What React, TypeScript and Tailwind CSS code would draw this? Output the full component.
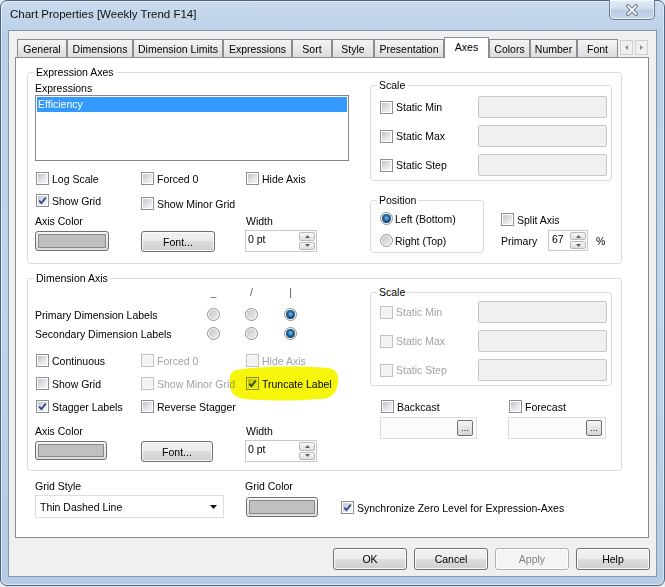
import type { ReactNode } from "react"
import clsx from "clsx"

function Box({ checked, disabled }: { checked?: boolean; disabled?: boolean }) {
	return (
		<span
			className={clsx(
				"relative flex h-[13px] w-[13px] shrink-0 items-center justify-center border",
				disabled ? "border-[#c2c2c2] bg-[#f6f6f6]" : "border-[#8e8f8f] bg-white",
			)}
		>
			<span
				className={clsx(
					"h-[9px] w-[9px]",
					disabled ? "bg-[#f2f2f2]" : "bg-[linear-gradient(135deg,#bfc3c9_0%,#e3e5e8_55%,#f7f7f7_100%)]",
				)}
			/>
			{checked && (
				<svg viewBox="0 0 11 11" className="absolute left-0 top-0 h-[11px] w-[11px]">
					<path d="M2.2 5.6 L4.4 8 L8.8 2.6" fill="none" stroke="#33478a" strokeWidth="1.8" />
				</svg>
			)}
		</span>
	)
}

function Chk({
	label,
	checked,
	disabled,
	className,
}: {
	label: string
	checked?: boolean
	disabled?: boolean
	className?: string
}) {
	return (
		<div className={clsx("flex items-center gap-[3px] whitespace-nowrap", className)}>
			<Box checked={checked} disabled={disabled} />
			<span className={disabled ? "text-[#a2a2a2]" : ""}>{label}</span>
		</div>
	)
}

function Radio({ on }: { on?: boolean }) {
	return (
		<span className="flex h-[13px] w-[13px] shrink-0 items-center justify-center rounded-full border border-[#929292] bg-[#f6f6f6]">
			<span
				className={clsx(
					"h-[9px] w-[9px] rounded-full",
					on
						? "bg-[radial-gradient(circle_at_50%_45%,#9fd4f5_0%,#2f7fbe_28%,#0b3a66_70%)]"
						: "bg-[linear-gradient(135deg,#c6c6c6,#ededed)]",
				)}
			/>
		</span>
	)
}

function RadioItem({ label, on }: { label: string; on?: boolean }) {
	return (
		<div className="flex items-center gap-[2px] whitespace-nowrap">
			<Radio on={on} />
			<span>{label}</span>
		</div>
	)
}

function Group({ label, className, children }: { label: string; className?: string; children?: ReactNode }) {
	return (
		<div className={clsx("relative rounded-[3px] border border-[#d5dfe5]", className)}>
			<span className="absolute -top-[7px] left-[6px] whitespace-nowrap bg-white px-[2px] leading-[12px]">{label}</span>
			{children}
		</div>
	)
}

function Btn({ children, className, disabled }: { children: ReactNode; className?: string; disabled?: boolean }) {
	return (
		<div
			className={clsx(
				"flex items-center justify-center rounded-[3px] border shadow-[inset_0_0_0_1px_rgba(255,255,255,0.85)]",
				disabled
					? "border-[#adb2b5] bg-[#f4f4f4] text-[#838383]"
					: "border-[#707070] bg-[linear-gradient(#f2f2f2_0%,#ebebeb_49%,#dddddd_50%,#cfcfcf_100%)]",
				className,
			)}
		>
			{children}
		</div>
	)
}

function Swatch({ className }: { className?: string }) {
	return (
		<div className={clsx("rounded-[3px] border border-[#707070] bg-[linear-gradient(#f6f6f6,#dcdcdc)] p-[2px]", className)}>
			<div className="h-full w-full border border-[#8a8a8a] bg-[#c0c0c0]" />
		</div>
	)
}

function SpinBtn({ up }: { up?: boolean }) {
	return (
		<span className="flex flex-1 items-center justify-center rounded-[2px] border border-[#b9b9b9] bg-[linear-gradient(#f7f7f7,#dfdfdf)]">
			<svg width="5" height="3" viewBox="0 0 5 3">
				<path d={up ? "M0 3 L2.5 0 L5 3Z" : "M0 0 L5 0 L2.5 3Z"} fill="#5f5f5f" />
			</svg>
		</span>
	)
}

function Spin({ value, className }: { value: string; className?: string }) {
	return (
		<div className={clsx("flex border border-[#c9c9c9] bg-white", className)}>
			<span className="flex-1 pl-[2px] pt-[2px]">{value}</span>
			<div className="flex w-[17px] flex-col gap-px py-px pr-px">
				<SpinBtn up />
				<SpinBtn />
			</div>
		</div>
	)
}

function TextBox({ className }: { className?: string }) {
	return <div className={clsx("rounded-[2px] border border-[#c6c6c6] bg-[#f0f0f0]", className)} />
}

function Browse({ className }: { className?: string }) {
	return (
		<div className={clsx("flex items-center justify-end border border-[#dedede] bg-[#fbfbfb] pr-[3px]", className)}>
			<div className="flex h-[16px] w-[16px] items-end justify-center rounded-[2px] border border-[#707070] bg-[linear-gradient(#f4f4f4,#d6d6d6)] pb-[2px] text-[9px] leading-[9px]">
				...
			</div>
		</div>
	)
}

const tabs: [string, number][] = [
	["General", 50],
	["Dimensions", 66],
	["Dimension Limits", 90],
	["Expressions", 69],
	["Sort", 40],
	["Style", 42],
	["Presentation", 70],
	["Axes", 45],
	["Colors", 41],
	["Number", 47],
	["Font", 41],
]

function TabStrip() {
	return (
		<div className="flex h-[20px] items-end pl-[2px]">
			{tabs.map(([name, w]) =>
				name === "Axes" ? (
					<div
						key={name}
						style={{ width: w }}
						className="relative z-10 -mb-px flex h-[21px] items-center justify-center border border-b-0 border-[#898c95] bg-white pb-[3px]"
					>
						{name}
					</div>
				) : (
					<div
						key={name}
						style={{ width: w }}
						className="flex h-[18px] items-center justify-center border border-b-0 border-[#898c95] bg-[linear-gradient(#f4f4f4_0%,#e9e9e9_50%,#dcdcdc_100%)]"
					>
						{name}
					</div>
				),
			)}
			<div className="mb-[2px] ml-[2px] flex gap-[2px]">
				{[true, false].map((left) => (
					<div
						key={String(left)}
						className="flex h-[15px] w-[13px] items-center justify-center border border-[#cfcfcf] bg-[#f0f0f0]"
					>
						<svg width="3" height="5" viewBox="0 0 3 5">
							<path d={left ? "M3 0 L0 2.5 L3 5Z" : "M0 0 L3 2.5 L0 5Z"} fill="#8a8a8a" />
						</svg>
					</div>
				))}
			</div>
		</div>
	)
}

function ExpressionAxes() {
	return (
		<Group label="Expression Axes" className="flex h-[192px] w-[595px]">
			<div className="flex w-[342px] flex-col pl-[7px]">
				<div className="mt-[9px]">Expressions</div>
				<div className="mt-px h-[66px] w-[314px] border border-[#828790] bg-white p-px">
					<div className="h-[15px] bg-[#3399ff] pl-[1px] leading-[15px] text-white">Efficiency</div>
				</div>
				<div className="ml-px mt-[11px] grid grid-cols-[105px_105px_auto]">
					<Chk label="Log Scale" />
					<Chk label="Forced 0" />
					<Chk label="Hide Axis" />
				</div>
				<div className="ml-px mt-[9px] grid grid-cols-[105px_105px_auto] items-start">
					<Chk label="Show Grid" checked />
					<Chk label="Show Minor Grid" className="mt-[3px]" />
				</div>
				<div className="mt-[5px] grid grid-cols-[211px_auto]">
					<span>Axis Color</span>
					<span>Width</span>
				</div>
				<div className="mt-[3px] grid grid-cols-[106px_104px_auto] items-start">
					<Swatch className="mt-px h-[20px] w-[74px]" />
					<Btn className="mt-px h-[21px] w-[74px]">Font...</Btn>
					<Spin value="0 pt" className="h-[22px] w-[72px]" />
				</div>
			</div>
			<div className="flex w-[242px] flex-col pt-[12px]">
				<Group label="Scale" className="h-[96px]">
					<div className="flex flex-col gap-[7px] pl-[9px] pr-[4px] pt-[10px]">
						{["Static Min", "Static Max", "Static Step"].map((l) => (
							<div key={l} className="flex items-center justify-between">
								<Chk label={l} />
								<TextBox className="h-[22px] w-[129px]" />
							</div>
						))}
					</div>
				</Group>
				<div className="mt-[19px] flex">
					<Group label="Position" className="h-[53px] w-[114px]">
						<div className="flex flex-col gap-[9px] pl-[9px] pt-[11px]">
							<RadioItem label="Left (Bottom)" on />
							<RadioItem label="Right (Top)" />
						</div>
					</Group>
					<div className="ml-[17px] flex flex-col pt-[13px]">
						<Chk label="Split Axis" />
						<div className="mt-[4px] flex items-center">
							<span className="w-[47px]">Primary</span>
							<Spin value="67" className="h-[21px] w-[40px] pl-px" />
							<span className="ml-[8px]">%</span>
						</div>
					</div>
				</div>
			</div>
		</Group>
	)
}

function Highlight() {
	return (
		<svg
			viewBox="0 0 110 35"
			className="pointer-events-none absolute -left-[17px] -top-[11px] h-[35px] w-[110px] mix-blend-multiply"
		>
			<path
				d="M7 4 C22 1 62 -1 99 2 C107 3 110 8 109 16 C108 26 104 33 90 33 C60 35 32 35 16 33 C5 32 1 26 1 18 C0 10 2 5 7 4 Z"
				fill="#f6f60c"
			/>
		</svg>
	)
}

function DimensionAxis() {
	return (
		<Group label="Dimension Axis" className="mt-[14px] flex h-[193px] w-[595px]">
			<div className="flex w-[342px] flex-col pl-[7px]">
				<div className="mt-[7px] grid grid-cols-[172px_38px_39px_13px] text-[#555]">
					<span />
					<span className="w-[13px] text-center">_</span>
					<span className="w-[13px] text-center">/</span>
					<span className="w-[13px] text-center">|</span>
				</div>
				<div className="mt-[10px] grid h-[13px] grid-cols-[172px_38px_39px_13px] items-center">
					<span>Primary Dimension Labels</span>
					<Radio />
					<Radio />
					<Radio on />
				</div>
				<div className="mt-[6px] grid h-[13px] grid-cols-[172px_38px_39px_13px] items-center">
					<span>Secondary Dimension Labels</span>
					<Radio />
					<Radio />
					<Radio on />
				</div>
				<div className="ml-px mt-[14px] grid grid-cols-[105px_105px_auto]">
					<Chk label="Continuous" />
					<Chk label="Forced 0" disabled />
					<Chk label="Hide Axis" disabled />
				</div>
				<div className="ml-px mt-[10px] grid grid-cols-[105px_105px_auto]">
					<Chk label="Show Grid" />
					<Chk label="Show Minor Grid" disabled />
					<div className="relative">
						<Chk label="Truncate Label" checked />
						<Highlight />
					</div>
				</div>
				<div className="ml-px mt-[10px] grid grid-cols-[105px_105px_auto]">
					<Chk label="Stagger Labels" checked />
					<Chk label="Reverse Stagger" />
				</div>
				<div className="mt-[12px] grid grid-cols-[211px_auto]">
					<span>Axis Color</span>
					<span>Width</span>
				</div>
				<div className="mt-[3px] grid grid-cols-[106px_104px_auto] items-start">
					<Swatch className="mt-px h-[19px] w-[72px]" />
					<Btn className="mt-px h-[21px] w-[72px]">Font...</Btn>
					<Spin value="0 pt" className="h-[22px] w-[72px]" />
				</div>
			</div>
			<div className="flex w-[242px] flex-col pt-[13px]">
				<Group label="Scale" className="h-[94px]">
					<div className="flex flex-col gap-[7px] pl-[9px] pr-[4px] pt-[8px]">
						{["Static Min", "Static Max", "Static Step"].map((l) => (
							<div key={l} className="flex items-center justify-between">
								<Chk label={l} disabled />
								<TextBox className="h-[22px] w-[129px]" />
							</div>
						))}
					</div>
				</Group>
				<div className="mt-[14px] grid grid-cols-[128px_auto] pl-[11px]">
					<Chk label="Backcast" />
					<Chk label="Forecast" />
				</div>
				<div className="mt-[4px] grid grid-cols-[128px_auto] pl-[10px]">
					<Browse className="h-[22px] w-[97px]" />
					<Browse className="h-[22px] w-[98px]" />
				</div>
			</div>
		</Group>
	)
}

function TitleBar() {
	return (
		<div className="flex h-[29px] items-start justify-between">
			<span className="pl-[9px] pt-[7px] text-[11.5px] leading-[13px] text-[#111]">Chart Properties [Weekly Trend F14]</span>
			<div className="-mt-px mr-[9px] flex h-[20px] w-[46px] items-center justify-center rounded-b-[5px] border border-t-0 border-[#6d7f96] bg-[linear-gradient(#e4edf7_0%,#cedcec_48%,#b9cce3_52%,#c8d9ec_100%)] shadow-[inset_0_0_0_1px_rgba(255,255,255,0.55)]">
				<svg width="14" height="12" viewBox="0 0 14 12">
					<path d="M3 2 L11 10 M11 2 L3 10" stroke="#55667c" strokeWidth="3.6" strokeLinecap="round" />
					<path d="M3 2 L11 10 M11 2 L3 10" stroke="#ffffff" strokeWidth="1.8" strokeLinecap="round" />
				</svg>
			</div>
		</div>
	)
}

export default function App() {
	return (
		<div className="h-[587px] w-[665px] overflow-hidden bg-[#e6e9ed] font-['Liberation_Sans',Arial,sans-serif] text-[10.5px] leading-[12px] text-black">
			<div className="flex h-[586px] flex-col rounded-[7px] border border-[#4f6683] bg-[linear-gradient(180deg,#cadbee_0%,#b9cfe7_6%,#c1d5ea_50%,#b5cbe4_100%)] shadow-[inset_0_0_0_1px_rgba(255,255,255,0.5)]">
				<TitleBar />
				<div className="mx-[7px] flex h-[547px] flex-col border border-[#8497b0] bg-[#f0f0f0] pl-[6px] pt-[6px]">
					<TabStrip />
					<div className="h-[481px] w-[634px] border border-[#898c95] bg-white px-[11px] pt-[14px]">
						<ExpressionAxes />
						<DimensionAxis />
						<div className="mt-[9px] flex pl-[8px]">
							<div className="w-[210px]">
								<div>Grid Style</div>
								<div className="mt-[3px] flex h-[23px] w-[189px] items-center justify-between border border-[#dedede] bg-white pl-[4px] pr-[6px]">
									<span>Thin Dashed Line</span>
									<svg width="7" height="4" viewBox="0 0 7 4">
										<path d="M0 0 L7 0 L3.5 4Z" fill="#111" />
									</svg>
								</div>
							</div>
							<div className="w-[96px]">
								<div>Grid Color</div>
								<Swatch className="ml-px mt-[5px] h-[20px] w-[72px]" />
							</div>
							<div className="pt-[21px]">
								<Chk label="Synchronize Zero Level for Expression-Axes" checked />
							</div>
						</div>
					</div>
					<div className="mt-[10px] flex justify-end gap-[7px] pr-[6px]">
						<Btn className="h-[22px] w-[74px]">OK</Btn>
						<Btn className="h-[22px] w-[74px]">Cancel</Btn>
						<Btn className="h-[22px] w-[74px]" disabled>
							Apply
						</Btn>
						<Btn className="h-[22px] w-[74px]">Help</Btn>
					</div>
				</div>
			</div>
		</div>
	)
}
